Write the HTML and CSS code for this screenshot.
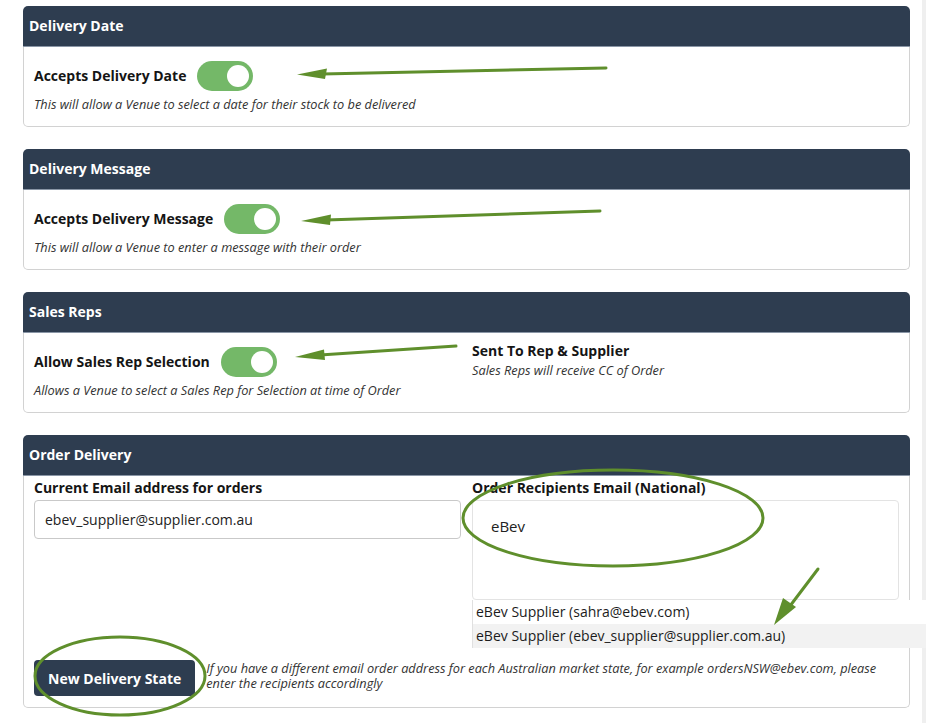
FILE: index.html
```html
<!DOCTYPE html>
<html>
<head>
<meta charset="utf-8">
<link rel="stylesheet" href="styles.css">
</head>
<body>
<div class="page">
  <main class="content">
    <section class="card">
      <div class="card-head">Delivery Date</div>
      <div class="card-body">
        <div class="switch-row">
          <span class="label">Accepts Delivery Date</span>
          <span class="toggle"><span class="knob"></span></span>
        </div>
        <p class="hint">This will allow a Venue to select a date for their stock to be delivered</p>
      </div>
    </section>

    <section class="card">
      <div class="card-head">Delivery Message</div>
      <div class="card-body">
        <div class="switch-row">
          <span class="label">Accepts Delivery Message</span>
          <span class="toggle"><span class="knob"></span></span>
        </div>
        <p class="hint">This will allow a Venue to enter a message with their order</p>
      </div>
    </section>

    <section class="card">
      <div class="card-head">Sales Reps</div>
      <div class="card-body cols reps">
        <div class="col col-left">
          <div class="switch-row">
            <span class="label">Allow Sales Rep Selection</span>
            <span class="toggle"><span class="knob"></span></span>
          </div>
          <p class="hint">Allows a Venue to select a Sales Rep for Selection at time of Order</p>
        </div>
        <div class="col">
          <div class="label">Sent To Rep &amp; Supplier</div>
          <p class="hint tight">Sales Reps will receive CC of Order</p>
        </div>
      </div>
    </section>

    <section class="card">
      <div class="card-head">Order Delivery</div>
      <div class="card-body delivery">
        <div class="cols">
          <div class="col">
            <div class="label field-label">Current Email address for orders</div>
            <div class="input">ebev_supplier@supplier.com.au</div>
          </div>
          <div class="col">
            <div class="label field-label">Order Recipients Email (National)</div>
            <div class="multi">
              <div class="area"><span class="typed">eBev</span></div>
              <ul class="dropdown">
                <li>eBev Supplier (sahra@ebev.com)</li>
                <li class="active">eBev Supplier (ebev_supplier@supplier.com.au)</li>
              </ul>
            </div>
          </div>
        </div>
        <div class="actions">
          <button class="btn">New Delivery State</button>
          <p class="hint small">If you have a different email order address for each Australian market state, for example ordersNSW@ebev.com, please enter the recipients accordingly</p>
        </div>
      </div>
    </section>
  </main>
  <div class="scroll"></div>

  <svg class="notes" width="926" height="723" viewBox="0 0 926 723">
    <g stroke="#5f8f2c" stroke-width="3" fill="none" stroke-linecap="round">
      <line x1="606" y1="68" x2="322" y2="74"/>
      <line x1="600" y1="211" x2="326" y2="220"/>
      <line x1="456" y1="346" x2="320" y2="355"/>
      <line x1="818" y1="569" x2="790" y2="606"/>
      <ellipse cx="613" cy="518" rx="150" ry="48"/>
      <ellipse cx="120" cy="676" rx="85" ry="39"/>
    </g>
    <g fill="#5f8f2c">
      <polygon points="297,74.5 327,68.5 325,79"/>
      <polygon points="301,221 331,214.5 330,225"/>
      <polygon points="295,357 324,349.5 325,360"/>
      <polygon points="774,625 783,598 796,607"/>
    </g>
  </svg>
</div>
</body>
</html>
```
FILE: styles.css
```css
* { box-sizing: border-box; }

body {
  margin: 0;
  font-family: "Open Sans", "Noto Sans", sans-serif;
  color: #151515;
  background: #ffffff;
}

.page {
  position: relative;
  display: flex;
  width: 926px;
  height: 723px;
  overflow: hidden;
}

.content {
  flex: 1;
  display: flex;
  flex-direction: column;
  gap: 22px;
  padding: 6px 12px 0 23px;
}

.scroll {
  width: 4px;
  background: #efefef;
}

.card-head {
  height: 41px;
  line-height: 40px;
  padding-left: 6px;
  background: #2e3d50;
  color: #ffffff;
  font-weight: 700;
  font-size: 14px;
  border-radius: 5px 5px 0 0;
  border-bottom: 1px solid #8a96a6;
}

.card-body {
  background: #ffffff;
  border: 1px solid #d2d2d2;
  border-top: none;
  border-radius: 0 0 5px 5px;
  padding: 14px 10px 13px;
}

.switch-row {
  display: flex;
  align-items: center;
  gap: 11px;
  height: 30px;
}

.label {
  font-weight: 700;
  font-size: 14px;
  line-height: 18px;
  color: #151515;
}

.toggle {
  position: relative;
  width: 56px;
  height: 30px;
  border-radius: 15px;
  background: #74b868;
}

.knob {
  position: absolute;
  right: 4px;
  top: 4px;
  width: 22px;
  height: 22px;
  border-radius: 50%;
  background: #ffffff;
}

.hint {
  margin: 4px 0 0;
  font-style: italic;
  font-size: 12.75px;
  line-height: 18px;
  color: #333333;
}

.hint.tight { margin-top: 1px; }

.cols {
  display: grid;
  grid-template-columns: 1fr 1fr;
  column-gap: 11px;
}

.reps { padding-top: 9px; }
.reps .col-left { padding-top: 5px; }

.delivery { padding: 3px 10px 11px; }

.field-label { margin-bottom: 3px; }

.input {
  height: 39px;
  border: 1px solid #c9c9c9;
  border-radius: 4px;
  padding: 0 10px;
  line-height: 37px;
  font-size: 14px;
  color: #222222;
}

.multi { position: relative; }

.area {
  height: 100px;
  border: 1px solid #e3e3e3;
  border-radius: 4px;
  padding: 10px 0 0 12px;
}

.typed {
  display: inline-block;
  padding: 4px 6px;
  font-size: 15px;
  line-height: 22px;
  color: #222222;
  background: #ffffff;
}

.dropdown {
  position: absolute;
  left: 0;
  top: 100%;
  width: 470px;
  margin: 0;
  padding: 0;
  list-style: none;
  background: #ffffff;
  border-left: 1px solid #e0e0e0;
  font-size: 14px;
  color: #1c1c1c;
  z-index: 2;
}

.dropdown li {
  height: 24px;
  line-height: 24px;
  padding-left: 3px;
}

.dropdown li.active { background: #f2f2f2; }

.actions {
  display: flex;
  align-items: flex-start;
  gap: 11px;
  margin-top: 60px;
}

.btn {
  flex: none;
  height: 36px;
  padding: 0 14px;
  border: none;
  border-radius: 4px;
  background: #2e3d50;
  color: #ffffff;
  font-family: inherit;
  font-weight: 700;
  font-size: 14px;
}

.hint.small {
  margin: 1px 0 0;
  line-height: 15px;
}

.notes {
  position: absolute;
  left: 0;
  top: 0;
  pointer-events: none;
  z-index: 5;
}
```
